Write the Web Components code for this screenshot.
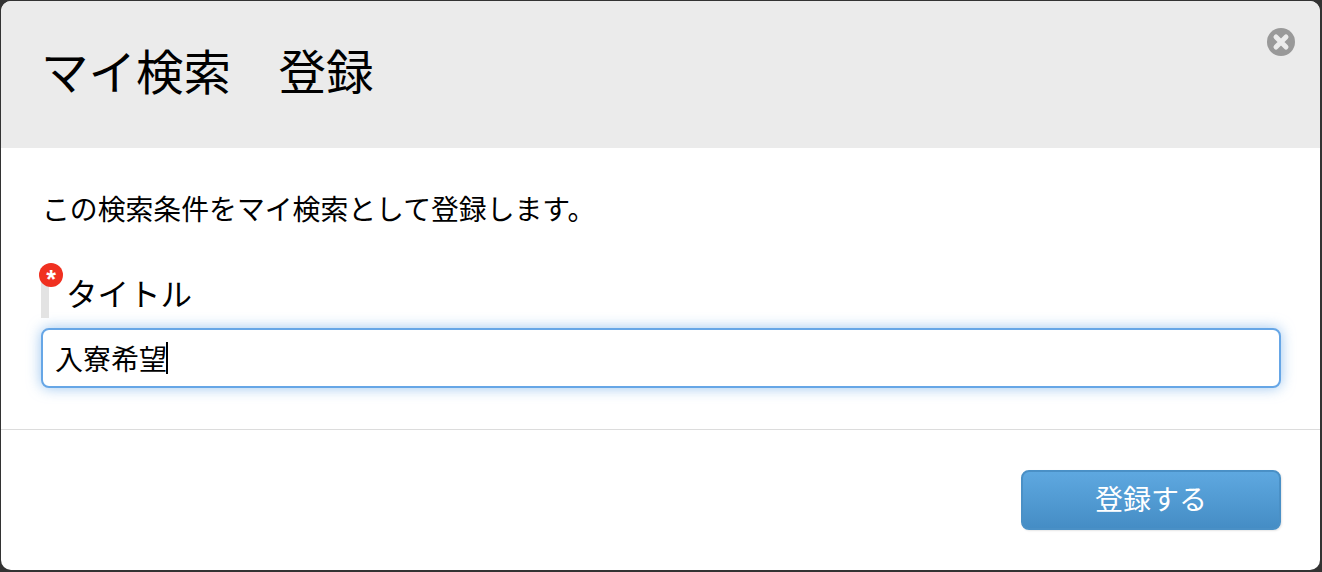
<!DOCTYPE html>
<html lang="ja">
<head>
<meta charset="utf-8">
<title>マイ検索 登録</title>
<style>
  html, body { margin: 0; height: 572px; overflow: hidden; background: #333; }
  body { font-family: "Noto Sans CJK JP", "Liberation Sans", sans-serif; color: #000; }
</style>
</head>
<body>
<my-dialog heading="マイ検索　登録">
  <p>この検索条件をマイ検索として登録します。</p>
  <required-field label="タイトル" value="入寮希望"></required-field>
  <primary-button slot="footer">登録する</primary-button>
</my-dialog>

<script>
class MyDialog extends HTMLElement {
  constructor() {
    super();
    const shadowRoot = this.attachShadow({ mode: "open" });
    shadowRoot.innerHTML = `
      <style>
        :host {
          display: flex;
          flex-direction: column;
          width: 1319px;
          height: 569px;
          margin: 1px 0 0 1px;
          background: #fff;
          border-radius: 10px;
          overflow: hidden;
        }
        header {
          position: relative;
          height: 147px;
          flex: none;
          display: flex;
          align-items: flex-start;
          padding: 39px 0 0 40px;
          box-sizing: border-box;
          background: #ebebeb;
        }
        h1 {
          margin: 0;
          font-size: 47.5px;
          font-weight: 400;
          line-height: 60px;
        }
        .close {
          position: absolute;
          top: 27px;
          right: 25px;
          width: 28px;
          height: 28px;
        }
        .body {
          flex: none;
          height: 281px;
          padding: 0 39px 0 40px;
          box-sizing: border-box;
        }
        ::slotted(p) {
          margin: 38px 0 0 1px;
          font-size: 27.85px;
          line-height: 44px;
        }
        footer {
          flex: 1;
          display: flex;
          justify-content: flex-end;
          align-items: flex-start;
          padding: 40px 39px 0 0;
          border-top: 1px solid #dcdcdc;
        }
      </style>
      <header>
        <h1></h1>
        <svg class="close" viewBox="0 0 28 28">
          <circle cx="14" cy="14" r="14" fill="#999"/>
          <path d="M9 9L19 19M19 9L9 19" stroke="#ebebeb" stroke-width="5" stroke-linecap="round"/>
        </svg>
      </header>
      <div class="body"><slot></slot></div>
      <footer><slot name="footer"></slot></footer>
    `;
    shadowRoot.querySelector("h1").textContent = this.getAttribute("heading");
  }
}
window.customElements.define("my-dialog", MyDialog);

class RequiredField extends HTMLElement {
  constructor() {
    super();
    const shadowRoot = this.attachShadow({ mode: "open" });
    shadowRoot.innerHTML = `
      <style>
        :host { display: block; margin-top: 47px; }
        .label {
          position: relative;
          box-sizing: border-box;
          height: 41px;
          display: flex;
          align-items: center;
          padding: 0 0 11px 17px;
          font-size: 31.5px;
          line-height: 41px;
          border-left: 8px solid #e3e3e3;
        }
        .mark {
          position: absolute;
          top: -14px;
          left: -10px;
          box-sizing: border-box;
          width: 24px;
          height: 24px;
          padding-top: 4px;
          border-radius: 50%;
          background: #f03020;
          color: #fff;
          font: 700 25px/24px "Liberation Sans", sans-serif;
          text-align: center;
        }
        .input {
          box-sizing: border-box;
          height: 60px;
          margin-top: 10px;
          padding: 0 12px;
          display: flex;
          align-items: center;
          background: #fff;
          border: 2px solid #66a6e6;
          border-radius: 8px;
          box-shadow: 0 0 14px rgba(102, 166, 230, .65);
          font-size: 28px;
        }
        .caret {
          width: 2px;
          height: 32px;
          margin-left: -1px;
          background: #000;
        }
      </style>
      <div class="label"><span class="mark">*</span><span class="text"></span></div>
      <div class="input"><span class="value"></span><span class="caret"></span></div>
    `;
    shadowRoot.querySelector(".text").textContent = this.getAttribute("label");
    shadowRoot.querySelector(".value").textContent = this.getAttribute("value");
  }
}
window.customElements.define("required-field", RequiredField);

class PrimaryButton extends HTMLElement {
  constructor() {
    super();
    const shadowRoot = this.attachShadow({ mode: "open" });
    shadowRoot.innerHTML = `
      <style>
        :host {
          display: flex;
          align-items: center;
          justify-content: center;
          box-sizing: border-box;
          width: 260px;
          height: 60px;
          padding-bottom: 4px;
          color: #fff;
          font-size: 28px;
          border: 2px solid #4a90c6;
          border-radius: 8px;
          background: linear-gradient(#5ea8e0, #458dc5);
          box-shadow: 1px 1px 2px rgba(0, 0, 0, .1);
          cursor: pointer;
        }
      </style>
      <slot></slot>
    `;
  }
}
window.customElements.define("primary-button", PrimaryButton);
</script>
</body>
</html>
